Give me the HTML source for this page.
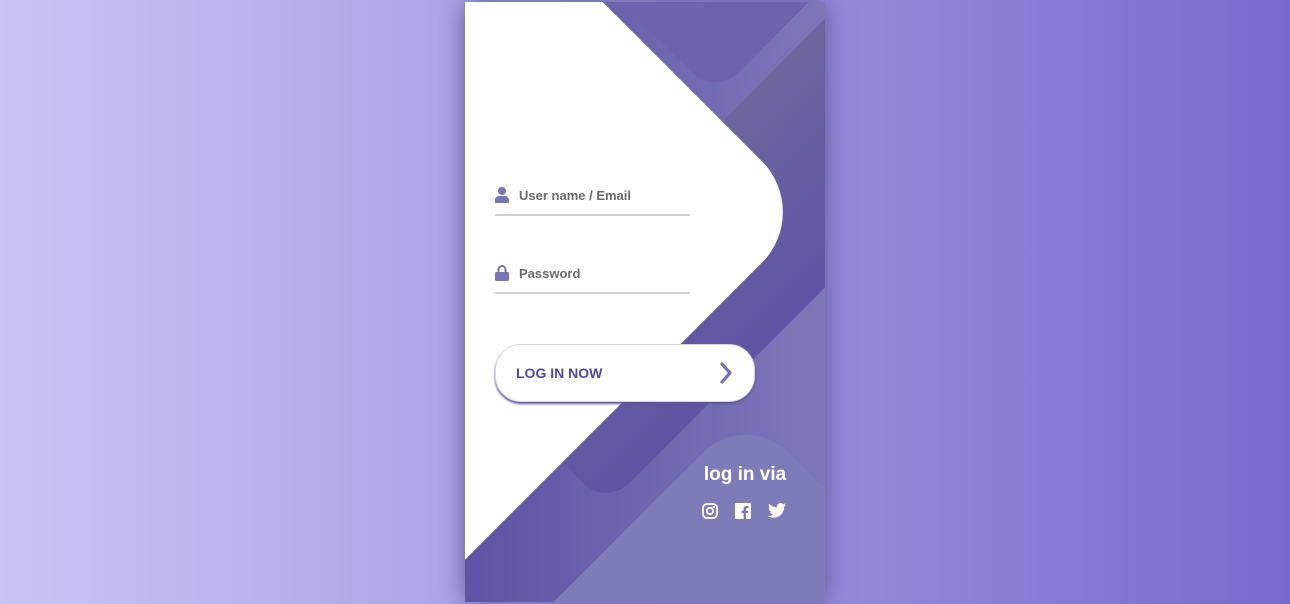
<!DOCTYPE html>
<html style="overflow:hidden"><head><style>
*{box-sizing:border-box;margin:0;padding:0}
body{width:1290px;height:604px;font-family:"Liberation Sans",sans-serif;background:linear-gradient(90deg,#C7C5F4,#776BCC);display:flex;align-items:center;justify-content:center;overflow:hidden}
.screen{background:linear-gradient(90deg,#5D54A4,#7C78B8);position:relative;height:600px;width:360px;box-shadow:0 0 24px #5C5696;overflow:hidden}
.bg{position:absolute;inset:0;overflow:hidden;z-index:0}
.s{transform:rotate(45deg);position:absolute}
.s1{height:520px;width:520px;background:#FFF;top:-50px;right:120px;border-radius:0 72px 0 0}
.s2{height:220px;width:220px;background:#6C63AC;top:-172px;right:0;border-radius:32px}
.s3{height:540px;width:190px;background:linear-gradient(270deg,#5D54A4,#6A679E);top:-24px;right:0;border-radius:32px}
.s4{height:400px;width:200px;background:#7E7BB9;top:420px;right:50px;border-radius:60px}
.content{position:relative;z-index:1;height:100%}
.login{width:320px;padding:30px;padding-top:156px}
.field{padding:20px 0;position:relative}
.icon{position:absolute;top:29px;left:0;width:14px;height:16px}
.input{border-bottom:2px solid #D1D1D4;padding:9px 10px 10px 24px;font-weight:700;width:75%;font-size:13px;color:#6a6a6a;height:38px;line-height:17px}
.submit{background:#fff;font-size:14px;margin-top:30px;padding:16px 20px;border-radius:26px;border:1px solid #D4D3E8;font-weight:700;display:flex;align-items:center;width:100%;height:58px;color:#4C489D;box-shadow:0 2px 2px #5C5696}
.submit svg{margin-left:auto}
.social{position:absolute;top:460px;width:160px;text-align:center;right:0;color:#fff}
.social h3{font-size:19px;font-weight:700;line-height:26px}
.icons{display:flex;justify-content:center;gap:17px;margin-top:15px;padding-right:2px}
</style></head><body>
<div class="screen">
<div class="bg"><span class="s s3"></span><span class="s s2"></span><span class="s s1"></span><span class="s s4"></span></div>
<div class="content">
<div class="login">
<div class="field"><svg class="icon" viewBox="0 0 14 16"><circle cx="7" cy="4" r="4" fill="#7875B5"/><path d="M0 16v-3c0-2 1.5-4 4-4h6c2.5 0 4 2 4 4v3z" fill="#7875B5"/></svg><div class="input">User name / Email</div></div>
<div class="field"><svg class="icon" viewBox="0 0 14 16"><path d="M3.5 7V4.5a3.5 3.5 0 0 1 7 0V7" stroke="#7875B5" stroke-width="2" fill="none"/><rect x="0" y="7" width="14" height="9" rx="1.5" fill="#7875B5"/></svg><div class="input">Password</div></div>
<div class="submit">LOG IN NOW<svg width="16" height="22" viewBox="0 0 16 22"><path d="M4 2l8 9-8 9" stroke="#7875B5" stroke-width="3.2" fill="none" stroke-linecap="round" stroke-linejoin="round"/></svg></div>
</div>
<div class="social"><h3>log in via</h3>
<div class="icons">
<svg width="16" height="16" viewBox="0 0 16 16"><rect x="1" y="1" width="14" height="14" rx="4" stroke="#fff" stroke-width="1.8" fill="none"/><circle cx="8" cy="8" r="3.2" stroke="#fff" stroke-width="1.8" fill="none"/><circle cx="12" cy="4" r="1" fill="#fff"/></svg>
<svg width="16" height="16" viewBox="0 0 16 16"><rect width="16" height="16" rx="1" fill="#fff"/><path d="M11 16V10h2l.3-2.3H11V6.3c0-.7.2-1.1 1.1-1.1h1.3V3.1c-.3 0-1-.1-1.8-.1-1.8 0-3 1.1-3 3.1v1.6H6.6V10h2V16z" fill="#7A74B4"/></svg>
<svg width="18" height="15" viewBox="0 0 24 20"><path d="M24 2.4c-.9.4-1.8.6-2.8.8 1-.6 1.8-1.6 2.2-2.7-1 .6-2 1-3.1 1.2A4.9 4.9 0 0 0 11.9 6 14 14 0 0 1 1.7.9a4.9 4.9 0 0 0 1.5 6.6c-.8 0-1.6-.3-2.2-.6 0 2.4 1.7 4.4 3.9 4.8-.7.2-1.5.2-2.2.1.6 2 2.4 3.4 4.6 3.4A9.9 9.9 0 0 1 0 17.3 14 14 0 0 0 7.5 19.5c9.1 0 14-7.5 14-14v-.6c1-.7 1.8-1.6 2.5-2.5z" fill="#fff"/></svg>
</div></div>
</div></div>
</body></html>
